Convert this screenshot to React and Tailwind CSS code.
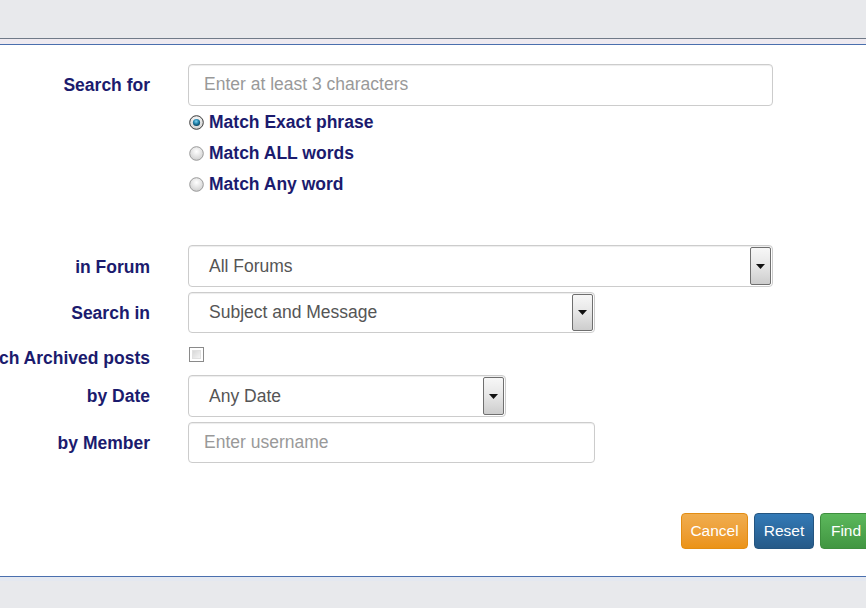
import React from "react";

function Radio({ checked }) {
  return (
    <svg width="15" height="15" viewBox="0 0 15 15" className="shrink-0">
      <defs>
        <radialGradient id={checked ? "rgc" : "rgu"} cx="50%" cy="35%" r="65%">
          <stop offset="0%" stopColor="#ffffff" />
          <stop offset="100%" stopColor="#cfcfcf" />
        </radialGradient>
        <radialGradient id="dot" cx="45%" cy="35%" r="60%">
          <stop offset="0%" stopColor="#7fd3f0" />
          <stop offset="60%" stopColor="#1f7fa8" />
          <stop offset="100%" stopColor="#0d4a66" />
        </radialGradient>
      </defs>
      <circle cx="7.5" cy="7.5" r="6.8" fill={`url(#${checked ? "rgc" : "rgu"})`} stroke={checked ? "#3b3b3b" : "#9a9a9a"} strokeWidth="1" />
      {checked && <circle cx="7.5" cy="7.5" r="3.6" fill="url(#dot)" />}
    </svg>
  );
}

function Checkbox() {
  return (
    <div className="w-[15px] h-[15px] border border-[#8a8a8a] bg-white p-[2px]">
      <div className="w-full h-full bg-gradient-to-br from-[#d8d8d8] to-[#f4f4f4] border border-[#e0e0e0]" />
    </div>
  );
}

function Select({ width, value }) {
  return (
    <div
      className={`${width} h-full flex items-center border border-[#cccccc] rounded-[4px] bg-white pl-[20px] pr-[1px] py-[1px] shadow-[inset_0_1px_1px_rgba(0,0,0,0.075)]`}
    >
      <span className="flex-1 text-[17.5px] text-[#555555] leading-none pt-[1px]">{value}</span>
      <div className="w-[21px] h-full flex items-center justify-center border border-[#6f6f6f] rounded-[2px] bg-gradient-to-b from-[#f7f7f7] via-[#e6e6e6] to-[#cdcdcd]">
        <svg width="9" height="5" viewBox="0 0 9 5">
          <path d="M0 0 H9 L4.5 5 Z" fill="#111" />
        </svg>
      </div>
    </div>
  );
}

function Label({ children, className = "" }) {
  return (
    <div className={`w-[150px] shrink-0 flex justify-end whitespace-nowrap text-[17.5px] font-bold text-[#1b1b6e] ${className}`}>
      <span>{children}</span>
    </div>
  );
}

export default function App() {
  return (
    <div
      className="w-full h-[608px] overflow-hidden bg-[#e8e9ec]"
      style={{ fontFamily: '"Liberation Sans", Arial, sans-serif' }}
    >
      <div className="h-[38px] bg-[#e8e9ec]" />
      <div className="h-[1px] bg-[#707a88]" />
      <div className="h-[5px] bg-[#eeeaf0]" />
      <div className="h-[1px] bg-[#4a6fae]" />
      <div className="h-[531px] bg-white overflow-hidden">
        <div className="pt-[19px]">
          <div className="flex items-center h-[42px]">
            <Label className="pt-[1px]">Search for</Label>
            <div className="ml-[38px] w-[585px] h-full flex items-center border border-[#cccccc] rounded-[4px] px-[15px] shadow-[inset_0_1px_1px_rgba(0,0,0,0.075)]">
              <span className="text-[17.5px] text-[#999999] leading-none">Enter at least 3 characters</span>
            </div>
          </div>
          <div className="ml-[189px] pt-[1px] flex flex-col">
            {[
              ["Match Exact phrase", true],
              ["Match ALL words", false],
              ["Match Any word", false],
            ].map(([t, c]) => (
              <div key={t} className="h-[31px] flex items-center gap-[5px]">
                <Radio checked={c} />
                <span className="text-[17.5px] font-bold text-[#1b1b6e]">{t}</span>
              </div>
            ))}
          </div>

          <div className="mt-[45px] flex items-center h-[42px]">
            <Label className="pt-[2px]">in Forum</Label>
            <div className="ml-[38px] h-full">
              <Select width="w-[585px]" value="All Forums" />
            </div>
          </div>
          <div className="mt-[5px] flex items-center h-[41px]">
            <Label className="pt-[1px]">Search in</Label>
            <div className="ml-[38px] h-full">
              <Select width="w-[407px]" value="Subject and Message" />
            </div>
          </div>
          <div className="flex items-start h-[42px]">
            <Label className="pt-[15px] leading-[20px]">Search Archived posts</Label>
            <div className="ml-[39px] mt-[14px]">
              <Checkbox />
            </div>
          </div>
          <div className="flex items-center h-[42px]">
            <Label className="pt-[1px]">by Date</Label>
            <div className="ml-[38px] h-full">
              <Select width="w-[318px]" value="Any Date" />
            </div>
          </div>
          <div className="mt-[5px] flex items-center h-[41px]">
            <Label className="pt-[1px]">by Member</Label>
            <div className="ml-[38px] w-[407px] h-full flex items-center border border-[#cccccc] rounded-[4px] px-[15px] shadow-[inset_0_1px_1px_rgba(0,0,0,0.075)]">
              <span className="text-[17.5px] text-[#999999] leading-none">Enter username</span>
            </div>
          </div>

          <div className="mt-[50px] flex flex-nowrap pl-[681px] gap-[6px] whitespace-nowrap">
            <div className="w-[67px] h-[36px] shrink-0 flex items-center justify-center rounded-[4px] border border-[#e38d13] bg-gradient-to-b from-[#f0ad4e] to-[#eb9316] text-white text-[15.5px]">
              Cancel
            </div>
            <div className="w-[60px] h-[36px] shrink-0 flex items-center justify-center rounded-[4px] border border-[#245580] bg-gradient-to-b from-[#337ab7] to-[#265a88] text-white text-[15.5px]">
              Reset
            </div>
            <div className="w-[52px] h-[36px] shrink-0 flex items-center justify-center rounded-[4px] border border-[#3e8f3e] bg-gradient-to-b from-[#5cb85c] to-[#419641] text-white text-[15.5px]">
              Find
            </div>
          </div>
        </div>
      </div>
      <div className="h-[1px] bg-[#4a6fae]" />
      <div className="h-[4px] bg-[#e4e8f0]" />
      <div className="h-[27px] bg-[#e8e9ec]" />
    </div>
  );
}
